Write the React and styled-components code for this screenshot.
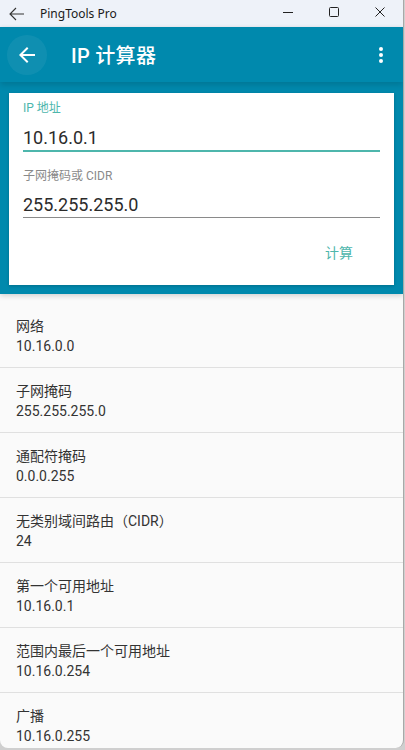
import React from 'react';
import styled, { createGlobalStyle } from 'styled-components';

const GlobalStyle = createGlobalStyle`
  html, body {
    margin: 0;
    padding: 0;
    background: #cfcfcf;
  }
  body {
    font-family: Roboto, "Noto Sans CJK SC", sans-serif;
  }
`;

const results = [
  { label: '网络', value: '10.16.0.0' },
  { label: '子网掩码', value: '255.255.255.0' },
  { label: '通配符掩码', value: '0.0.0.255' },
  { label: '无类别域间路由（CIDR）', value: '24' },
  { label: '第一个可用地址', value: '10.16.0.1' },
  { label: '范围内最后一个可用地址', value: '10.16.0.254' },
  { label: '广播', value: '10.16.0.255' },
];

const App = () => {
  return (
    <>
      <GlobalStyle />
      <Window>
        <TitleBar>
          <TitleLeft>
            <svg width="16" height="14" viewBox="0 0 16 14">
              <path d="M15 7H1.5M7 1L1 7l6 6" stroke="#333" strokeWidth="1.1" fill="none" />
            </svg>
            <WindowTitle>PingTools Pro</WindowTitle>
          </TitleLeft>
          <Controls>
            <ControlButton>
              <svg width="12" height="12" viewBox="0 0 12 12">
                <path d="M1 6.5h10" stroke="#222" strokeWidth="1" />
              </svg>
            </ControlButton>
            <ControlButton>
              <svg width="12" height="12" viewBox="0 0 12 12">
                <rect x="1.5" y="1.5" width="9" height="9" rx="1" stroke="#222" strokeWidth="1" fill="none" />
              </svg>
            </ControlButton>
            <ControlButton>
              <svg width="12" height="12" viewBox="0 0 12 12">
                <path d="M1.5 1.5l9 9M10.5 1.5l-9 9" stroke="#222" strokeWidth="1" />
              </svg>
            </ControlButton>
          </Controls>
        </TitleBar>

        <Header>
          <AppBar>
            <RoundButton>
              <svg width="24" height="24" viewBox="0 0 24 24">
                <path d="M20 11H7.83l5.59-5.59L12 4l-8 8 8 8 1.41-1.41L7.83 13H20v-2z" fill="#fff" />
              </svg>
            </RoundButton>
            <AppTitle>IP 计算器</AppTitle>
            <MenuButton>
              <Dot />
              <Dot />
              <Dot />
            </MenuButton>
          </AppBar>

          <CardArea>
            <Card>
              <Field>
                <FieldLabel focused>IP 地址</FieldLabel>
                <FieldInput focused>10.16.0.1</FieldInput>
              </Field>
              <Field>
                <FieldLabel>子网掩码或 CIDR</FieldLabel>
                <FieldInput>255.255.255.0</FieldInput>
              </Field>
              <Actions>
                <TextButton>计算</TextButton>
              </Actions>
            </Card>
          </CardArea>
        </Header>

        <ResultList>
          {results.map((r) => (
            <ResultItem key={r.label}>
              <ResultLabel>{r.label}</ResultLabel>
              <ResultValue>{r.value}</ResultValue>
            </ResultItem>
          ))}
        </ResultList>
      </Window>
    </>
  );
};

const Window = styled.div`
  width: 403px;
  height: 748px;
  display: flex;
  flex-direction: column;
  background: #fafafa;
  border-right: 1px solid #a8a8a8;
  border-radius: 0 0 8px 8px;
  overflow: hidden;
`;

const TitleBar = styled.div`
  height: 27px;
  flex-shrink: 0;
  display: flex;
  align-items: center;
  justify-content: space-between;
  background: #eef2f9;
`;

const TitleLeft = styled.div`
  display: flex;
  align-items: center;
  gap: 15px;
  padding-left: 9px;
`;

const WindowTitle = styled.span`
  font-family: "Noto Sans", "Open Sans", sans-serif;
  font-size: 12px;
  color: #1a1a1a;
`;

const Controls = styled.div`
  display: flex;
  height: 100%;
`;

const ControlButton = styled.div`
  width: 46px;
  height: 100%;
  display: flex;
  align-items: center;
  justify-content: center;
  margin-top: -2px;
`;

const Header = styled.div`
  position: relative;
  z-index: 1;
  background: #0089ad;
  box-shadow: 0 2px 5px rgba(0, 0, 0, 0.16);
  flex-shrink: 0;
`;

const AppBar = styled.div`
  height: 55px;
  display: flex;
  align-items: center;
  padding: 0 7px;
  box-shadow: 0 3px 6px rgba(0, 0, 0, 0.14);
`;

const RoundButton = styled.div`
  width: 40px;
  height: 40px;
  border-radius: 50%;
  background: rgba(255, 255, 255, 0.06);
  display: flex;
  align-items: center;
  justify-content: center;
`;

const AppTitle = styled.h1`
  flex: 1;
  margin: 0 0 0 24px;
  font-size: 20px;
  font-weight: 500;
  color: #fff;
  letter-spacing: 0.3px;
`;

const MenuButton = styled.div`
  width: 24px;
  height: 40px;
  margin-right: 3px;
  display: flex;
  flex-direction: column;
  align-items: center;
  justify-content: center;
  gap: 2px;
`;

const Dot = styled.span`
  width: 4px;
  height: 4px;
  border-radius: 50%;
  background: #fff;
`;

const CardArea = styled.div`
  padding: 11px 9px 9px;
`;

const Card = styled.div`
  background: #fff;
  padding: 7px 14px 15px;
  box-shadow: 0 1px 3px rgba(0, 0, 0, 0.2);
`;

const Field = styled.div`
  display: flex;
  flex-direction: column;
  & + & {
    margin-top: 16px;
  }
`;

const FieldLabel = styled.label`
  font-size: 12px;
  line-height: 16px;
  color: ${(props) => (props.focused ? '#4db6ac' : '#8a8a8a')};
`;

const FieldInput = styled.div`
  font-size: 18px;
  line-height: 24px;
  color: #2b2b2b;
  padding-top: ${(props) => (props.focused ? '10px' : '9px')};
  border-bottom: ${(props) => (props.focused ? '2px solid #4db6ac' : '1px solid #8a8a8a')};
`;

const Actions = styled.div`
  display: flex;
  justify-content: flex-end;
  margin-top: 16px;
`;

const TextButton = styled.div`
  height: 36px;
  padding: 0 16px;
  margin-right: 11px;
  display: flex;
  align-items: center;
  font-size: 14px;
  color: #4db6ac;
`;

const ResultList = styled.div`
  flex: 1;
  padding-top: 9px;
  overflow: hidden;
`;

const ResultItem = styled.div`
  padding: 13px 16px 11px;
  border-bottom: 1px solid #e0e0e0;
  &:last-child {
    border-bottom: none;
  }
`;

const ResultLabel = styled.div`
  font-size: 14px;
  line-height: 20px;
  color: #333;
`;

const ResultValue = styled.div`
  font-size: 14px;
  line-height: 20px;
  color: #333;
`;

export default App;
